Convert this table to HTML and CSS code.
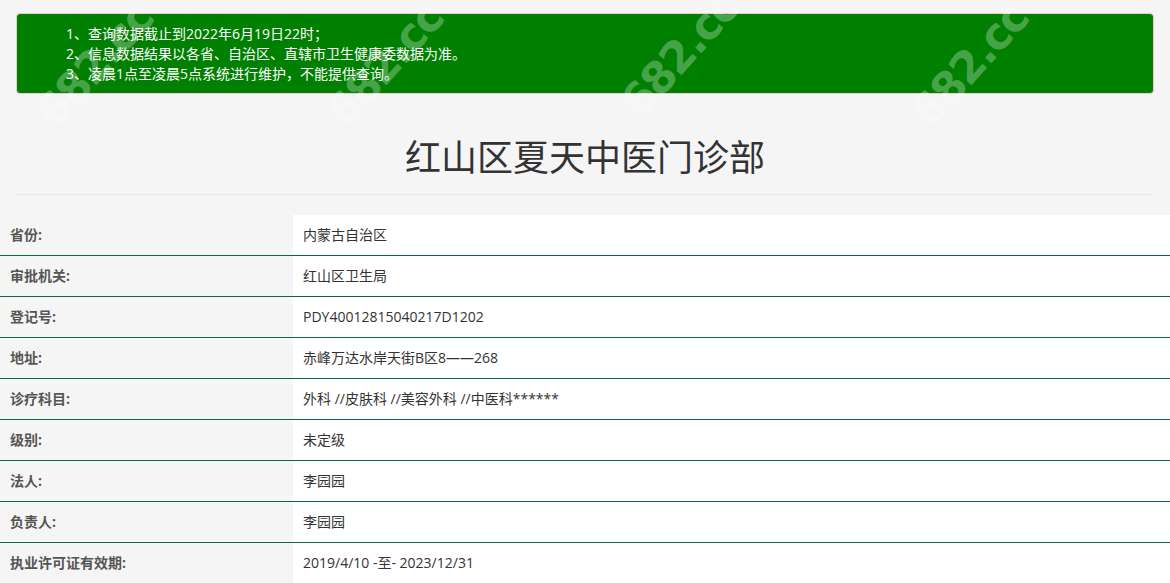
FILE: index.html
```html
<!DOCTYPE html>
<html lang="zh">
<head>
<meta charset="utf-8">
<title>红山区夏天中医门诊部</title>
<link rel="stylesheet" href="styles.css">
</head>
<body>
<div class="wrap">
  <div class="container">
    <div class="alert">
      <p>1、查询数据截止到2022年6月19日22时；</p>
      <p>2、信息数据结果以各省、自治区、直辖市卫生健康委数据为准。</p>
      <p>3、凌晨1点至凌晨5点系统进行维护，不能提供查询。</p>
    </div>
    <h1 class="title">红山区夏天中医门诊部</h1>
  </div>
  <table class="info">
    <tr><th>省份:</th><td>内蒙古自治区</td></tr>
    <tr><th>审批机关:</th><td>红山区卫生局</td></tr>
    <tr><th>登记号:</th><td>PDY40012815040217D1202</td></tr>
    <tr><th>地址:</th><td>赤峰万达水岸天街B区8——268</td></tr>
    <tr><th>诊疗科目:</th><td>外科 //皮肤科 //美容外科 //中医科******</td></tr>
    <tr><th>级别:</th><td>未定级</td></tr>
    <tr><th>法人:</th><td>李园园</td></tr>
    <tr><th>负责人:</th><td>李园园</td></tr>
    <tr><th>执业许可证有效期:</th><td>2019/4/10 -至- 2023/12/31</td></tr>
  </table>
  <div class="wm wm1">682.cc</div>
  <div class="wm wm2">682.cc</div>
  <div class="wm wm3">682.cc</div>
  <div class="wm wm4">682.cc</div>
</div>
</body>
</html>
```
FILE: styles.css
```css
html, body {
  margin: 0;
  padding: 0;
  background: #f5f5f5;
}
body {
  font-family: "Open Sans", "Noto Sans CJK SC", sans-serif;
  font-size: 14px;
  color: #333;
}
.wrap {
  position: relative;
  overflow: hidden;
  height: 583px;
}
.container {
  padding: 13px 16px 0 16px;
}
.alert {
  background: #008000;
  border: 1px solid #ebccd1;
  border-radius: 4px;
  padding: 10px 10px 9px 49px;
  color: #fff;
}
.alert p {
  margin: 0;
  line-height: 20px;
  font-size: 14px;
}
.title {
  margin: 40px 0 20px;
  padding-bottom: 18px;
  border-bottom: 1px solid #e8e8e8;
  text-align: center;
  font-size: 36px;
  font-weight: normal;
  line-height: 42px;
  color: #333;
  font-family: "Noto Sans CJK SC", sans-serif;
}
.info {
  width: 100%;
  border-collapse: collapse;
}
.info th, .info td {
  height: 40px;
  padding: 0 10px;
  border-bottom: 1px solid #0b6a37;
  text-align: left;
  font-size: 14px;
  vertical-align: middle;
  line-height: 20px;
}
.info tr:last-child th, .info tr:last-child td {
  border-bottom: none;
}
.info th {
  width: 273px;
  background: #f5f5f5;
  color: #555;
  font-weight: bold;
}
.info td {
  background: #fff;
  color: #333;
}
.wm {
  position: absolute;
  font-family: "DejaVu Sans", sans-serif;
  font-weight: bold;
  font-size: 44px;
  line-height: 50px;
  color: rgba(255, 255, 255, 0.28);
  transform: rotate(-48deg);
  pointer-events: none;
  letter-spacing: -2px;
}
.wm1 { left: 20px; top: 40px; }
.wm2 { left: 310px; top: 40px; }
.wm3 { left: 605px; top: 30px; }
.wm4 { left: 895px; top: 40px; }
```
